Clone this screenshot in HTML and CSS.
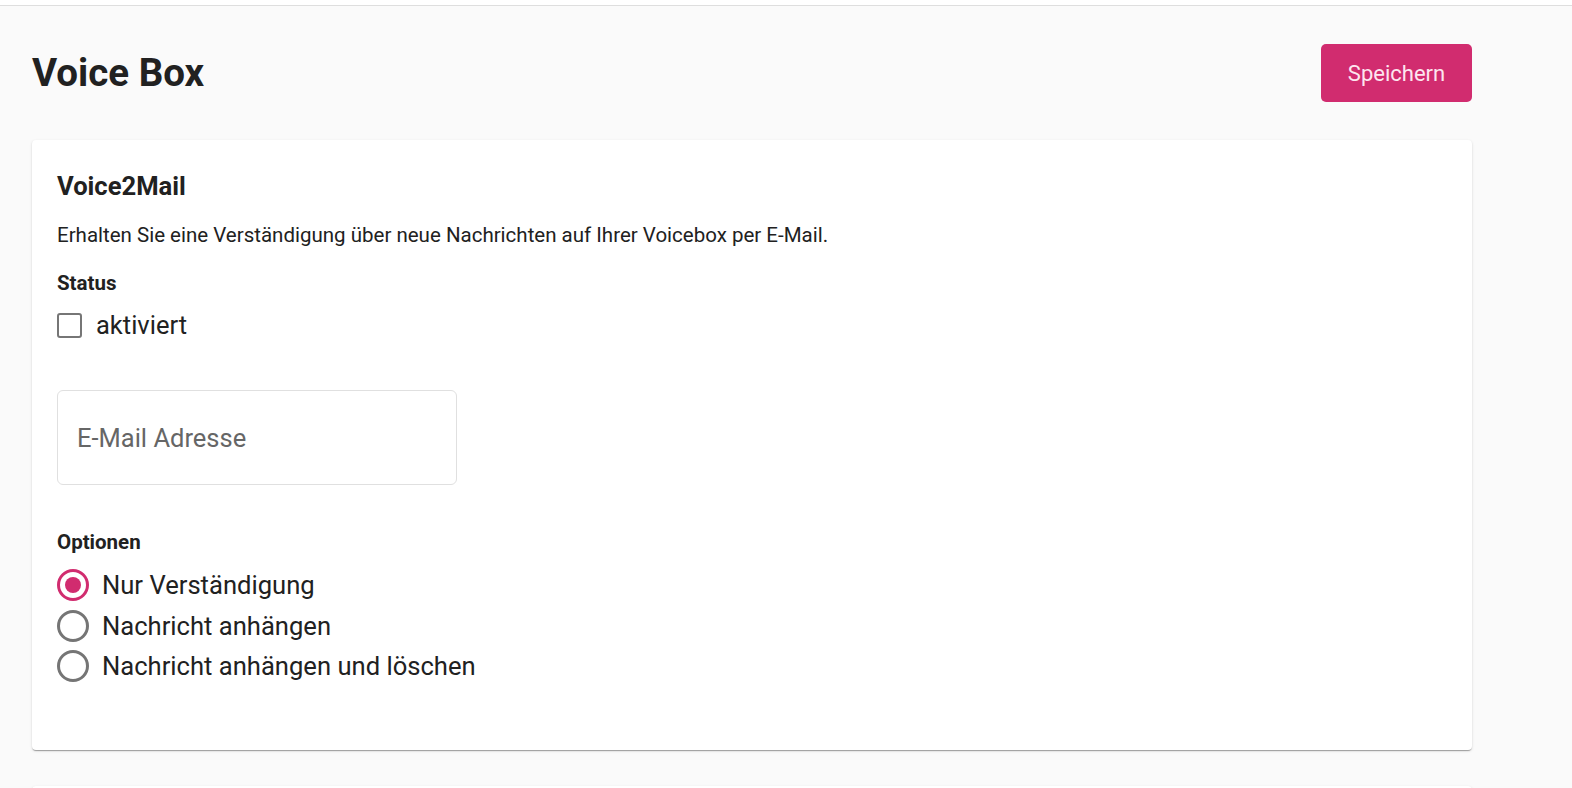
FILE: index.html
```html
<!DOCTYPE html>
<html lang="de">
<head>
<meta charset="utf-8">
<title>Voice Box</title>
<link rel="stylesheet" href="styles.css">
</head>
<body>
<div class="topbar"></div>
<main class="main">
  <div class="page-head">
    <h1 class="title">Voice Box</h1>
    <button class="btn-save" type="button">Speichern</button>
  </div>
  <section class="card">
    <h2 class="card-title">Voice2Mail</h2>
    <p class="desc">Erhalten Sie eine Verständigung über neue Nachrichten auf Ihrer Voicebox per E-Mail.</p>
    <div class="label">Status</div>
    <label class="check-row"><span class="checkbox"></span><span class="check-text">aktiviert</span></label>
    <div class="field"><span class="placeholder">E-Mail Adresse</span></div>
    <div class="label label-opt">Optionen</div>
    <div class="radios">
      <label class="radio-row"><span class="radio checked"></span><span class="radio-text">Nur Verständigung</span></label>
      <label class="radio-row"><span class="radio"></span><span class="radio-text">Nachricht anhängen</span></label>
      <label class="radio-row"><span class="radio"></span><span class="radio-text">Nachricht anhängen und löschen</span></label>
    </div>
  </section>
  <section class="card card-next"></section>
</main>
</body>
</html>
```

FILE: styles.css
```css
* { box-sizing: border-box; }
html, body { margin: 0; padding: 0; }
body {
  background: #fafafa;
  font-family: Roboto, "Liberation Sans", sans-serif;
  color: #212121;
  height: 788px;
  overflow: hidden;
}
.topbar {
  height: 6px;
  background: #ffffff;
  border-bottom: 1px solid #dedede;
}
.main {
  padding: 38px 100px 0 32px;
}
.page-head {
  display: flex;
  justify-content: space-between;
  align-items: center;
  height: 58px;
  margin-bottom: 38px;
}
.title {
  margin: 0;
  font-size: 38.5px;
  font-weight: 700;
  line-height: 46px;
  color: #212121;
}
.btn-save {
  width: 151px;
  height: 58px;
  border: none;
  border-radius: 5px;
  background: #d12c6f;
  color: #fde6ef;
  font-family: Roboto, "Liberation Sans", sans-serif;
  font-size: 22px;
  padding: 0;
}
.card {
  background: #ffffff;
  border-radius: 4px;
  box-shadow: 0 2px 1px -1px rgba(0,0,0,0.2), 0 1px 1px 0 rgba(0,0,0,0.14), 0 1px 3px 0 rgba(0,0,0,0.12);
  padding: 31px 25px 63px;
}
.card-title {
  margin: 0;
  font-size: 25.6px;
  font-weight: 700;
  line-height: 30px;
}
.desc {
  margin: 22px 0 0;
  font-size: 20.5px;
  line-height: 24px;
}
.label {
  margin-top: 24px;
  font-size: 20.5px;
  font-weight: 700;
  line-height: 24px;
}
.check-row {
  display: flex;
  align-items: center;
  gap: 14px;
  margin-top: 15px;
  height: 30px;
}
.checkbox {
  width: 25px;
  height: 25px;
  border: 2.5px solid #767676;
  border-radius: 3px;
}
.check-text {
  font-size: 25.5px;
}
.field {
  margin-top: 50px;
  width: 400px;
  height: 95px;
  border: 1px solid #e0e0e0;
  border-radius: 6px;
  display: flex;
  align-items: center;
  padding-left: 19px;
}
.placeholder {
  font-size: 25.5px;
  color: #666666;
}
.label-opt {
  margin-top: 45px;
}
.radios {
  margin-top: 11px;
  display: flex;
  flex-direction: column;
}
.radio-row {
  display: flex;
  align-items: center;
  gap: 13px;
  height: 40.5px;
}
.radio {
  width: 32px;
  height: 32px;
  border: 3px solid #757575;
  border-radius: 50%;
  display: flex;
  align-items: center;
  justify-content: center;
}
.radio.checked {
  border-color: #d12c6f;
}
.radio.checked::after {
  content: "";
  width: 16px;
  height: 16px;
  border-radius: 50%;
  background: #d12c6f;
}
.radio-text {
  font-size: 25.6px;
}
.card-next {
  margin-top: 36px;
  height: 100px;
  padding: 0;
}
```
